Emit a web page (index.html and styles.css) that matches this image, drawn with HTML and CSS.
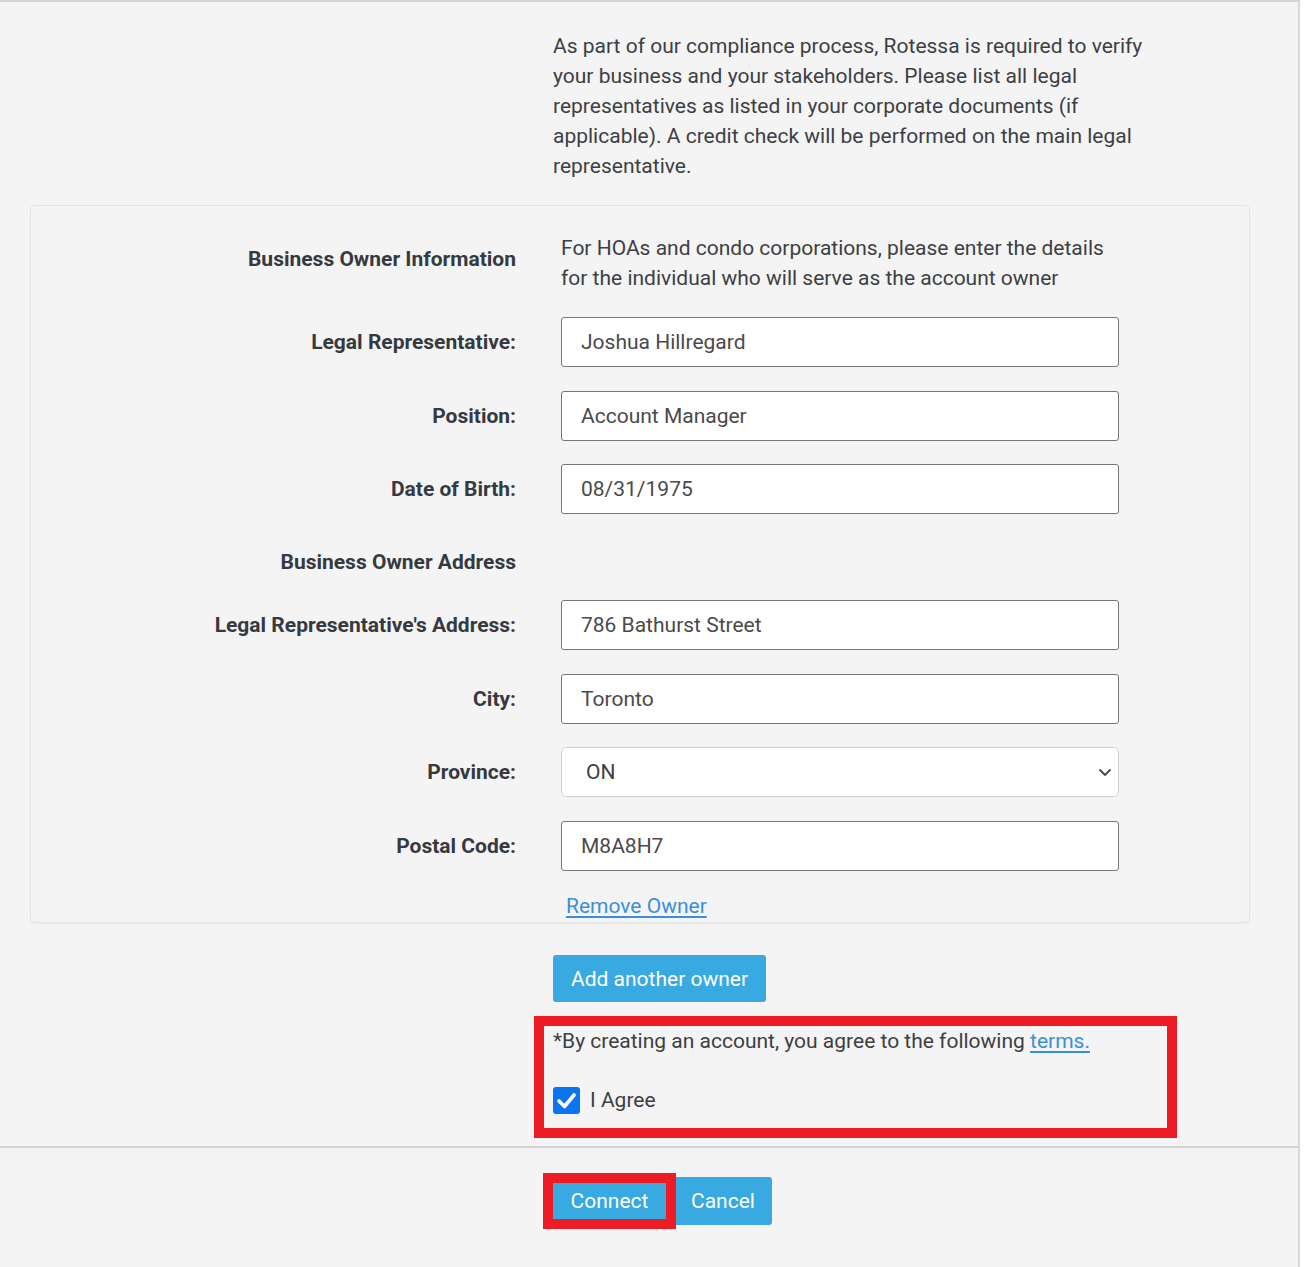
FILE: index.html
```html
<!DOCTYPE html>
<html lang="en">
<head>
<meta charset="utf-8">
<title>Business Owner Information</title>
<link rel="stylesheet" href="styles.css">
</head>
<body>
<div class="frame">
  <main class="content">
    <p class="intro offset">As part of our compliance process, Rotessa is required to verify your business and your stakeholders. Please list all legal representatives as listed in your corporate documents (if applicable). A credit check will be performed on the main legal representative.</p>

    <section class="card">
      <div class="row row-head">
        <div class="label label-head">Business Owner Information</div>
        <div class="note">For HOAs and condo corporations, please enter the details for the individual who will serve as the account owner</div>
      </div>
      <div class="row">
        <label class="label" for="rep">Legal Representative:</label>
        <input class="field" id="rep" type="text" value="Joshua Hillregard">
      </div>
      <div class="row">
        <label class="label" for="pos">Position:</label>
        <input class="field" id="pos" type="text" value="Account Manager">
      </div>
      <div class="row">
        <label class="label" for="dob">Date of Birth:</label>
        <input class="field" id="dob" type="text" value="08/31/1975">
      </div>
      <div class="row row-sub">
        <div class="label">Business Owner Address</div>
        <div></div>
      </div>
      <div class="row">
        <label class="label" for="addr">Legal Representative's Address:</label>
        <input class="field" id="addr" type="text" value="786 Bathurst Street">
      </div>
      <div class="row">
        <label class="label" for="city">City:</label>
        <input class="field" id="city" type="text" value="Toronto">
      </div>
      <div class="row">
        <label class="label" for="prov">Province:</label>
        <div class="select-wrap">
          <select class="select" id="prov">
            <option>ON</option>
          </select>
          <svg class="chevron" width="14" height="9" viewBox="0 0 14 9" aria-hidden="true"><path d="M1.5 1.5 L7 7 L12.5 1.5" fill="none" stroke="#444" stroke-width="1.8"/></svg>
        </div>
      </div>
      <div class="row">
        <label class="label" for="postal">Postal Code:</label>
        <input class="field" id="postal" type="text" value="M8A8H7">
      </div>
      <div class="row row-link">
        <div></div>
        <a class="remove" href="#">Remove Owner</a>
      </div>
    </section>

    <div class="offset add-wrap">
      <button class="btn" type="button">Add another owner</button>
    </div>

    <div class="terms">
      <p class="terms-text">*By creating an account, you agree to the following <a href="#" class="link">terms.</a></p>
      <div class="agree">
        <span class="check" aria-hidden="true"><svg width="27" height="27" viewBox="0 0 27 27"><path d="M6 14 L11.5 19.5 L21 8" fill="none" stroke="#fff" stroke-width="3.6" stroke-linecap="round" stroke-linejoin="round"/></svg></span>
        <span>I Agree</span>
      </div>
    </div>
  </main>

  <footer class="footer">
    <div class="actions">
      <button class="btn btn-connect" type="button">Connect</button>
      <button class="btn btn-cancel" type="button">Cancel</button>
    </div>
  </footer>
</div>
</body>
</html>
```
FILE: styles.css
```css
html, body {
  margin: 0;
  padding: 0;
  background: #ffffff;
}

body {
  font-family: Roboto, "Liberation Sans", Arial, sans-serif;
  font-size: 21px;
  color: #3c3f44;
}

.frame {
  width: 1300px;
  min-height: 1267px;
  box-sizing: border-box;
  background: #f4f4f4;
  border-top: 2px solid #d4d4d4;
  border-right: 2px solid #d9d9d9;
}

.content {
  padding: 29px 0 8px 30px;
  width: 1220px;
}

.offset {
  margin-left: 523px;
}

.intro {
  margin-top: 0;
  margin-bottom: 24px;
  width: 600px;
  line-height: 30px;
}

.card {
  border: 1px solid #e4e4e4;
  border-radius: 5px;
  box-shadow: 0 1px 2px rgba(0, 0, 0, 0.04);
  padding: 27px 0 4px 0;
}

.row {
  display: grid;
  grid-template-columns: 485px 558px;
  column-gap: 45px;
  align-items: center;
  margin-bottom: 23.5px;
}

.label {
  text-align: right;
  font-weight: 700;
  color: #343a40;
  line-height: 30px;
}

.row-head {
  align-items: start;
  margin-bottom: 24px;
}

.label-head {
  padding-top: 11px;
}

.note {
  line-height: 30px;
  color: #3c3f44;
}

.row-sub {
  margin-top: 33px;
  margin-bottom: 23px;
}

.field {
  box-sizing: border-box;
  height: 50px;
  width: 558px;
  margin: 0;
  padding: 0 19px;
  font-family: inherit;
  font-size: 21px;
  color: #4a4a4a;
  background: #ffffff;
  border: 1px solid #767676;
  border-radius: 3px;
  outline: none;
}

.select-wrap {
  position: relative;
  width: 558px;
  height: 50px;
}

.select {
  appearance: none;
  -webkit-appearance: none;
  box-sizing: border-box;
  width: 558px;
  height: 50px;
  margin: 0;
  padding: 0 24px;
  font-family: inherit;
  font-size: 21px;
  color: #3c3f44;
  background: #ffffff;
  border: 1px solid #d0d0d0;
  border-radius: 6px;
}

.chevron {
  position: absolute;
  right: 7px;
  top: 21px;
}

.row-link {
  margin-top: 2px;
  margin-bottom: 0;
}

.remove {
  margin-left: 5px;
  line-height: 24px;
  color: #3b8fd8;
  text-decoration: underline;
  text-underline-offset: 3px;
  text-decoration-thickness: 2px;
  justify-self: start;
}

.add-wrap {
  margin-top: 32px;
}

.btn {
  font-family: inherit;
  font-size: 21px;
  color: #ffffff;
  background: #38a9e1;
  border: none;
  border-radius: 3px;
  cursor: pointer;
}

.add-wrap .btn {
  height: 47px;
  padding: 0 18px;
}

.terms {
  margin-top: 14px;
  margin-left: 504px;
  width: 643px;
  box-sizing: border-box;
  border: 10px solid #ed1c24;
  padding: 0 9px 13px 9px;
}

.terms-text {
  margin: 0;
  line-height: 30px;
}

.link {
  color: #3b8fd8;
  text-decoration: underline;
  text-underline-offset: 3px;
  text-decoration-thickness: 2px;
}

.agree {
  display: flex;
  align-items: center;
  gap: 10px;
  margin-top: 29px;
  line-height: 30px;
}

.check {
  display: inline-flex;
  width: 27px;
  height: 27px;
  background: #0b74ee;
  border-radius: 3px;
}

.footer {
  border-top: 2px solid #d4d4d4;
  padding-top: 25px;
  padding-left: 543px;
}

.actions {
  display: flex;
  align-items: center;
}

.btn-connect {
  box-sizing: content-box;
  width: 113px;
  height: 36px;
  padding: 0;
  border: 10px solid #ed1c24;
  border-radius: 0;
}

.btn-cancel {
  height: 48px;
  padding: 0 17px 0 15px;
  border-radius: 0 3px 3px 0;
}
```
